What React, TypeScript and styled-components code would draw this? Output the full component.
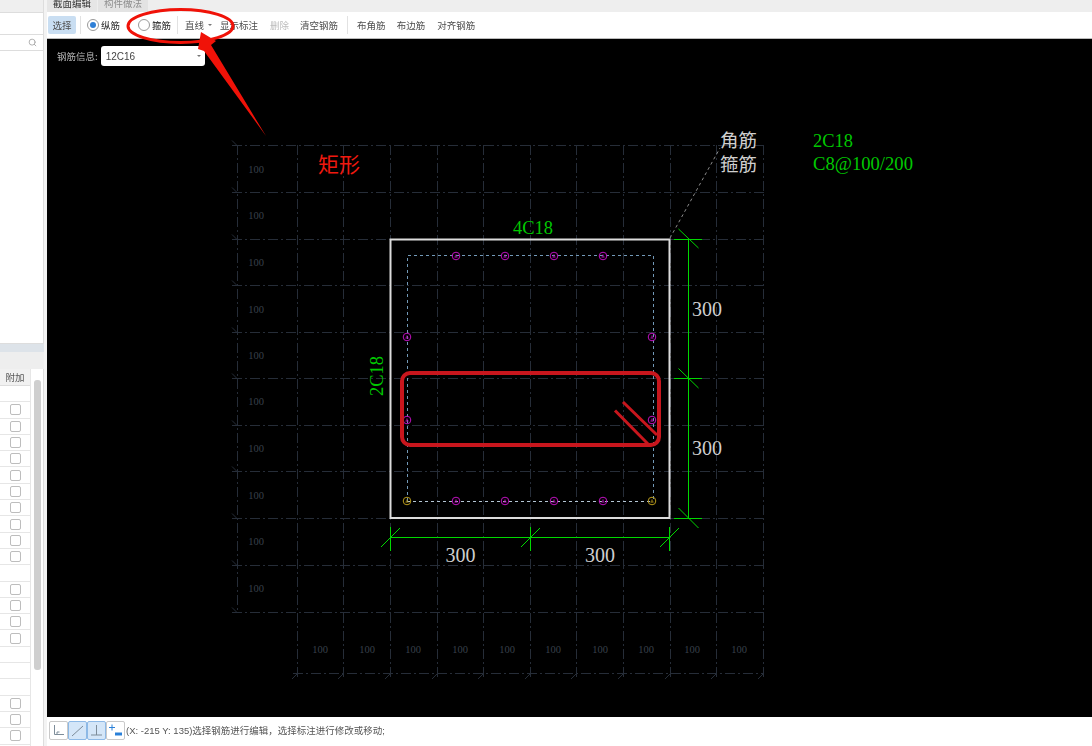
import styled, { createGlobalStyle } from 'styled-components';
import { Search } from 'lucide-react';

const GlobalStyle = createGlobalStyle`
  html, body {
    margin: 0;
    padding: 0;
    background: #f3f3f3;
  }
  * {
    box-sizing: border-box;
  }
`;

const CJK = `"Noto Sans CJK SC", "Liberation Sans", sans-serif`;
const SERIF = `"Liberation Serif", "Noto Sans CJK SC", serif`;

const Page = styled.div`
  position: relative;
  display: flex;
  width: 1092px;
  height: 746px;
  overflow: hidden;
  font-family: ${CJK};
  background: #f3f3f3;
`;

const Sidebar = styled.aside`
  display: flex;
  flex-direction: column;
  width: 44px;
  height: 746px;
  margin-right: 3px;
  filter: blur(0.3px);
`;

const SideTop = styled.div`
  height: 344px;
  background: #fff;
  border-right: 1px solid #ddd;
  border-bottom: 1px solid #ddd;
`;

const SideHead = styled.div`
  height: 13px;
  background: #efefef;
  border-bottom: 1px solid #ddd;
`;

const SearchBox = styled.div`
  display: flex;
  align-items: center;
  justify-content: flex-end;
  height: 17px;
  margin-top: 21px;
  padding-right: 6px;
  color: #9a9a9a;
  border-top: 1px solid #ddd;
  border-bottom: 1px solid #ddd;
`;

const SideBand = styled.div`
  height: 8px;
  background: #dde3e9;
`;

const SideGap = styled.div`
  height: 17px;
  background: #eee;
`;

const TableWrap = styled.div`
  display: flex;
  flex: 1;
  background: #fff;
  border-right: 1px solid #ddd;
`;

const TableCol = styled.div`
  width: 31px;
  border-right: 1px solid #e6e6e6;
`;

const HeadCell = styled.div`
  display: flex;
  align-items: center;
  justify-content: center;
  height: 17px;
  font-size: 9.5px;
  color: #555;
  background: #f1f1f1;
  border-bottom: 1px solid #ddd;
`;

const Row = styled.div`
  display: flex;
  align-items: center;
  justify-content: center;
  height: 16.3px;
  border-bottom: 1px solid #e6e6e6;
`;

const Check = styled.span`
  width: 11px;
  height: 11px;
  background: #fff;
  border: 1px solid #bdbdbd;
  border-radius: 2px;
`;

const Track = styled.div`
  flex: 1;
  padding: 11px 2px 0 3px;
  background: #fff;
`;

const Thumb = styled.div`
  width: 7px;
  height: 290px;
  background: #cfcfcf;
  border-radius: 3px;
`;

const Main = styled.main`
  display: flex;
  flex: 1;
  flex-direction: column;
  min-width: 0;
`;

const Tabs = styled.div`
  display: flex;
  height: 12px;
  gap: 1px;
  background: #eee;
  filter: blur(0.3px);
`;

const Tab = styled.div<{ $active?: boolean }>`
  width: 50px;
  height: 12px;
  overflow: hidden;
  font-size: 9.5px;
  line-height: 7px;
  text-align: center;
  color: ${(p) => (p.$active ? '#333' : '#8d8d8d')};
  background: ${(p) => (p.$active ? '#e6e6e6' : '#e3e3e3')};
`;

const Toolbar = styled.div`
  display: flex;
  align-items: center;
  height: 27px;
  padding: 0 0 1px 1px;
  background: #fff;
  border-bottom: 1px solid #bbb;
  filter: blur(0.3px);
`;

const ToolButton = styled.span<{ $on?: boolean; $off?: boolean; $gap?: number }>`
  display: flex;
  align-items: center;
  justify-content: center;
  height: 18px;
  margin-left: ${(p) => p.$gap ?? 0}px;
  padding: 0 ${(p) => (p.$on ? 4.5 : 0)}px;
  font-size: 9.5px;
  white-space: nowrap;
  color: ${(p) => (p.$off ? '#bcbcbc' : '#4d4d4d')};
  background: ${(p) => (p.$on ? '#c9def2' : 'transparent')};
  border-radius: 2px;
`;

const Sep = styled.span<{ $gap: number }>`
  width: 1px;
  height: 18px;
  margin-left: ${(p) => p.$gap}px;
  background: #e2e2e2;
`;

const RadioLabel = styled.label<{ $gap: number }>`
  display: flex;
  align-items: center;
  gap: 2px;
  margin-left: ${(p) => p.$gap}px;
  font-size: 9.5px;
  color: #222;
`;

const RadioDot = styled.span<{ $on?: boolean }>`
  display: flex;
  align-items: center;
  justify-content: center;
  width: 12px;
  height: 12px;
  background: #fff;
  border: 1px solid #999;
  border-radius: 50%;

  &::after {
    content: '';
    display: ${(p) => (p.$on ? 'block' : 'none')};
    width: 6px;
    height: 6px;
    background: #2f7fd6;
    border-radius: 50%;
  }
`;

const Caret = styled.span`
  width: 0;
  height: 0;
  margin-left: 4px;
  border-top: 2.5px solid #777;
  border-left: 2px solid transparent;
  border-right: 2px solid transparent;
`;

const Canvas = styled.section`
  position: relative;
  height: 678px;
  background: #000;
`;

const Drawing = styled.svg`
  position: absolute;
  top: 0;
  left: 0;
  width: 1045px;
  height: 678px;
`;

const InfoRow = styled.div`
  position: relative;
  display: flex;
  align-items: center;
  gap: 3px;
  height: 20px;
  margin-top: 7px;
  padding-left: 10px;
  font-size: 9.5px;
  color: #b9b9b9;
  filter: blur(0.25px);
`;

const Select = styled.div`
  display: flex;
  align-items: center;
  justify-content: space-between;
  width: 104px;
  height: 20px;
  padding: 0 4px 0 5px;
  font-family: "Liberation Sans", sans-serif;
  font-size: 10px;
  color: #444;
  background: #fff;
  border-radius: 3px;
`;

const StatusBar = styled.footer`
  display: flex;
  align-items: center;
  flex: 1;
  padding: 0 0 3px 2px;
  font-size: 9.5px;
  color: #555;
  background: #fff;
  filter: blur(0.25px);
`;

const ModeButton = styled.span<{ $on?: boolean }>`
  display: flex;
  align-items: center;
  justify-content: center;
  width: 19px;
  height: 19px;
  background: ${(p) => (p.$on ? '#d4e6f8' : '#fff')};
  border: 1px solid ${(p) => (p.$on ? '#8db9e6' : '#c9c9c9')};
  border-radius: 2px;
`;

const StatusText = styled.span`
  margin-left: 1px;
  white-space: nowrap;
  font-family: "Liberation Sans", "Noto Sans CJK SC", sans-serif;
`;

const Annotation = styled.svg`
  position: absolute;
  top: 0;
  left: 0;
  width: 1092px;
  height: 746px;
  pointer-events: none;
`;

const GridLabel = styled.text`
  font-family: ${SERIF};
  font-size: 10.5px;
  fill: #39414b;
  text-anchor: middle;
`;

const DimLabel = styled.text`
  font-family: ${SERIF};
  font-size: 20px;
  fill: #cfcfcf;
  text-anchor: middle;
`;

const BarLabel = styled.text`
  font-family: ${SERIF};
  font-size: 19px;
  fill: #00c800;
`;

const CalloutLabel = styled.text`
  font-family: ${CJK};
  font-size: 18.5px;
  fill: #cfcfcf;
`;

const ShapeLabel = styled.text`
  font-family: ${CJK};
  font-size: 21px;
  fill: #f0190f;
`;

const GRID_YS = [145.5, 192.5, 239.5, 285.5, 332.5, 378.5, 425.5, 471.5, 518.5, 565.5, 612.5];
const GRID_XS = [297.5, 343.5, 390.5, 437.5, 483.5, 530.5, 576.5, 623.5, 670.5, 716.5, 763.5];
const ROW_LABEL_YS = [173, 219, 266, 313, 359, 405, 452, 499, 545, 592];
const COL_LABEL_XS = [320, 367, 413, 460, 507, 553, 600, 646, 692, 739];
const TOP_BARS = [456, 505, 554, 603];
const CHECK_ROWS = [1, 2, 3, 4, 5, 6, 7, 8, 9, 10, 12, 13, 14, 15, 19, 20, 21];

const GRID = '#262d38';
const GREEN = '#00d800';
const MAGENTA = '#c010c0';
const AMBER = '#b89a1c';

const Marker = ({ x, y, color }: { x: number; y: number; color: string }) => (
  <g stroke={color} fill="none" strokeWidth="1">
    <circle cx={x} cy={y} r="3.8" />
    <path d={`M${x - 1.5} ${y + 1}h3M${x} ${y - 1.5}v2`} />
  </g>
);

const App = () => {
  const rows = Array.from({ length: 22 }, (_, i) => i);

  return (
    <Page>
      <GlobalStyle />
      <Sidebar>
        <SideTop>
          <SideHead />
          <SearchBox>
            <Search size={9} strokeWidth={2} />
          </SearchBox>
        </SideTop>
        <SideBand />
        <SideGap />
        <TableWrap>
          <TableCol>
            <HeadCell>附加</HeadCell>
            {rows.map((i) => (
              <Row key={i}>{CHECK_ROWS.includes(i) && <Check />}</Row>
            ))}
          </TableCol>
          <Track>
            <Thumb />
          </Track>
        </TableWrap>
      </Sidebar>

      <Main>
        <Tabs>
          <Tab $active>截面编辑</Tab>
          <Tab>构件做法</Tab>
        </Tabs>

        <Toolbar>
          <ToolButton $on>选择</ToolButton>
          <Sep $gap={4} />
          <RadioLabel $gap={6}>
            <RadioDot $on />
            纵筋
          </RadioLabel>
          <RadioLabel $gap={18}>
            <RadioDot />
            箍筋
          </RadioLabel>
          <Sep $gap={6} />
          <ToolButton $gap={7}>直线</ToolButton>
          <Caret />
          <ToolButton $gap={8}>显示标注</ToolButton>
          <ToolButton $gap={12} $off>
            删除
          </ToolButton>
          <ToolButton $gap={11}>清空钢筋</ToolButton>
          <Sep $gap={9} />
          <ToolButton $gap={9}>布角筋</ToolButton>
          <ToolButton $gap={11}>布边筋</ToolButton>
          <ToolButton $gap={12}>对齐钢筋</ToolButton>
        </Toolbar>

        <Canvas>
          <Drawing viewBox="47 39 1045 678">
            <g stroke={GRID} strokeWidth="1" strokeDasharray="10 3 2 3" fill="none">
              {GRID_YS.map((y) => (
                <line key={y} x1="232" y1={y} x2="764" y2={y} />
              ))}
              <line x1="293" y1="673.5" x2="764" y2="673.5" />
              <line x1="237.5" y1="145" x2="237.5" y2="612" />
              {GRID_XS.map((x) => (
                <line key={x} x1={x} y1="145" x2={x} y2="678" />
              ))}
            </g>
            <g stroke={GRID} fill="none">
              {GRID_YS.map((y) => (
                <path key={y} d={`M232 ${y - 5}l5.5 5.5`} />
              ))}
              {GRID_XS.map((x) => (
                <path key={x} d={`M${x} 673.5l-5.5 5.5`} />
              ))}
            </g>
            {ROW_LABEL_YS.map((y) => (
              <GridLabel key={y} x="256" y={y}>
                100
              </GridLabel>
            ))}
            {COL_LABEL_XS.map((x) => (
              <GridLabel key={x} x={x} y="653">
                100
              </GridLabel>
            ))}

            <rect x="390.5" y="239.5" width="279" height="278.5" fill="none" stroke="#dcdcdc" strokeWidth="2" />
            <path d="M407.5 501V255.5H653.5V501" fill="none" stroke="#7299b8" strokeDasharray="3 3" />
            <path d="M407 501.5H653" fill="none" stroke="#b4c6d4" strokeDasharray="3 3" />

            {TOP_BARS.map((x) => (
              <Marker key={x} x={x} y={256} color={MAGENTA} />
            ))}
            {TOP_BARS.map((x) => (
              <Marker key={x} x={x} y={501} color={MAGENTA} />
            ))}
            <Marker x={407} y={337} color={MAGENTA} />
            <Marker x={652} y={337} color={MAGENTA} />
            <Marker x={407} y={420} color={MAGENTA} />
            <Marker x={652} y={420} color={MAGENTA} />
            <Marker x={407} y={501} color={AMBER} />
            <Marker x={652} y={501} color={AMBER} />

            <g stroke={GREEN} strokeWidth="1" fill="none">
              <path d="M688.5 239V518M674 239.5H702M674 378.5H702M674 518.5H702" />
              <path d="M678.5 229L698.5 248M678.5 368.5L698.5 388M678.5 508L698.5 528" />
              <path d="M390 537.5H670M390.5 527V551M530.5 527V551M669.5 527V551" />
              <path d="M381 547L400 528M521 547L540 528M660 547L679 528" />
            </g>

            <path d="M670 238L720 148" stroke="#8a8a8a" strokeDasharray="3 3" fill="none" />

            <BarLabel x="513" y="234" textLength="40" lengthAdjust="spacingAndGlyphs">
              4C18
            </BarLabel>
            <BarLabel
              x="0"
              y="0"
              textLength="40"
              lengthAdjust="spacingAndGlyphs"
              transform="translate(383 396) rotate(-90)"
            >
              2C18
            </BarLabel>
            <BarLabel x="813" y="147" textLength="40" lengthAdjust="spacingAndGlyphs">
              2C18
            </BarLabel>
            <BarLabel x="813" y="170" textLength="100" lengthAdjust="spacingAndGlyphs">
              C8@100/200
            </BarLabel>

            <CalloutLabel x="720" y="147">
              角筋
            </CalloutLabel>
            <CalloutLabel x="720" y="171">
              箍筋
            </CalloutLabel>

            <DimLabel x="460.5" y="562">
              300
            </DimLabel>
            <DimLabel x="600" y="562">
              300
            </DimLabel>
            <DimLabel x="707" y="316">
              300
            </DimLabel>
            <DimLabel x="707" y="455">
              300
            </DimLabel>

            <ShapeLabel x="318" y="172">
              矩形
            </ShapeLabel>

            <g stroke="#c8161d" fill="none" strokeWidth="4">
              <rect x="402" y="373" width="257" height="72" rx="8" />
              <path d="M615 410.5L648 444M623 402L657 435" strokeWidth="3" />
            </g>
          </Drawing>

          <InfoRow>
            钢筋信息:
            <Select>
              12C16
              <Caret />
            </Select>
          </InfoRow>
        </Canvas>

        <StatusBar>
          <ModeButton>
            <svg width="15" height="15" viewBox="0 0 15 15" fill="none" stroke="#7d8c99">
              <path d="M3.5 2V11.5H13M6 11.5V9H8.5" />
            </svg>
          </ModeButton>
          <ModeButton $on>
            <svg width="15" height="15" viewBox="0 0 15 15" fill="none" stroke="#7d8c99">
              <path d="M2 13L13 3" />
            </svg>
          </ModeButton>
          <ModeButton $on>
            <svg width="15" height="15" viewBox="0 0 15 15" fill="none" stroke="#7d8c99">
              <path d="M7.5 2V12M2 12H13" />
            </svg>
          </ModeButton>
          <ModeButton>
            <svg width="15" height="15" viewBox="0 0 15 15" fill="none" stroke="#2a80d8">
              <path d="M4 1.5V7.5M1 4.5H7" />
              <path d="M7 11H14" strokeWidth="3" />
            </svg>
          </ModeButton>
          <StatusText>(X: -215 Y: 135)选择钢筋进行编辑，选择标注进行修改或移动;</StatusText>
        </StatusBar>
      </Main>

      <Annotation viewBox="0 0 1092 746">
        <ellipse cx="180.5" cy="26" rx="52.5" ry="16.5" fill="none" stroke="#f01208" strokeWidth="3" />
        <path d="M201 32L216 41L211 45L266 136L204 51L198 49Z" fill="#f01208" />
      </Annotation>
    </Page>
  );
};

export default App;
